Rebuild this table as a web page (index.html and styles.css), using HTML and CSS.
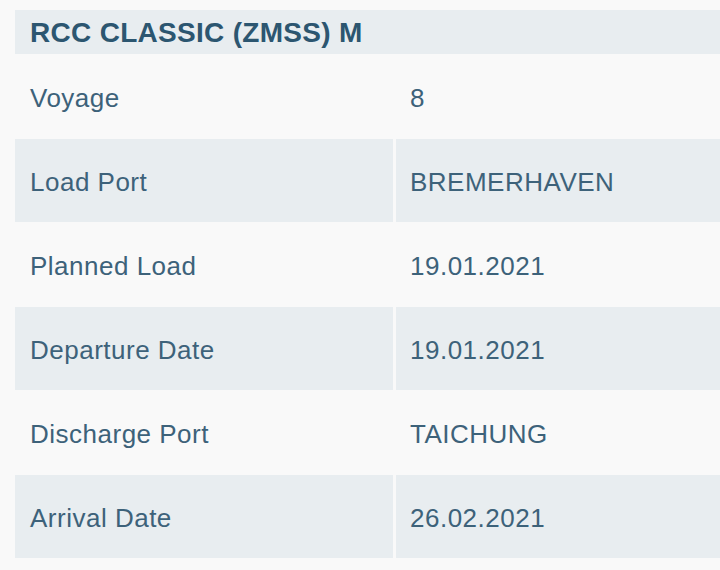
FILE: index.html
```html
<!DOCTYPE html>
<html>
<head>
<meta charset="utf-8">
<link rel="stylesheet" href="styles.css">
</head>
<body>
<div class="card">
  <div class="title">RCC CLASSIC (ZMSS) M</div>
  <div class="table">
    <div class="row">
      <div class="cell label">Voyage</div>
      <div class="cell value">8</div>
    </div>
    <div class="row shaded">
      <div class="cell label">Load Port</div>
      <div class="cell value">BREMERHAVEN</div>
    </div>
    <div class="row">
      <div class="cell label">Planned Load</div>
      <div class="cell value">19.01.2021</div>
    </div>
    <div class="row shaded">
      <div class="cell label">Departure Date</div>
      <div class="cell value">19.01.2021</div>
    </div>
    <div class="row">
      <div class="cell label">Discharge Port</div>
      <div class="cell value">TAICHUNG</div>
    </div>
    <div class="row shaded">
      <div class="cell label">Arrival Date</div>
      <div class="cell value">26.02.2021</div>
    </div>
  </div>
</div>
</body>
</html>
```
FILE: styles.css
```css
html, body {
  margin: 0;
  padding: 0;
  background: #f9f9f9;
}
body {
  width: 720px;
  height: 570px;
  overflow: hidden;
  font-family: "Liberation Sans", Arial, sans-serif;
}
.card {
  padding: 10px 0 0 15px;
}
.title {
  height: 44px;
  box-sizing: border-box;
  background: #e8edf0;
  color: #2c5670;
  font-weight: bold;
  font-size: 28px;
  letter-spacing: 0.3px;
  line-height: 44px;
  padding: 1px 0 0 15px;
  margin-bottom: 1px;
}
.table {
  display: flex;
  flex-direction: column;
  gap: 1px;
}
.row {
  display: grid;
  grid-template-columns: 378px 1fr;
  column-gap: 3px;
  height: 83px;
}
.cell {
  display: flex;
  align-items: center;
  box-sizing: border-box;
  padding-top: 3px;
  color: #3d627a;
  font-size: 26px;
  letter-spacing: 0.5px;
}
.label {
  padding-left: 15px;
}
.value {
  padding-left: 14px;
}
.shaded .cell {
  background: #e8edf0;
}
```
